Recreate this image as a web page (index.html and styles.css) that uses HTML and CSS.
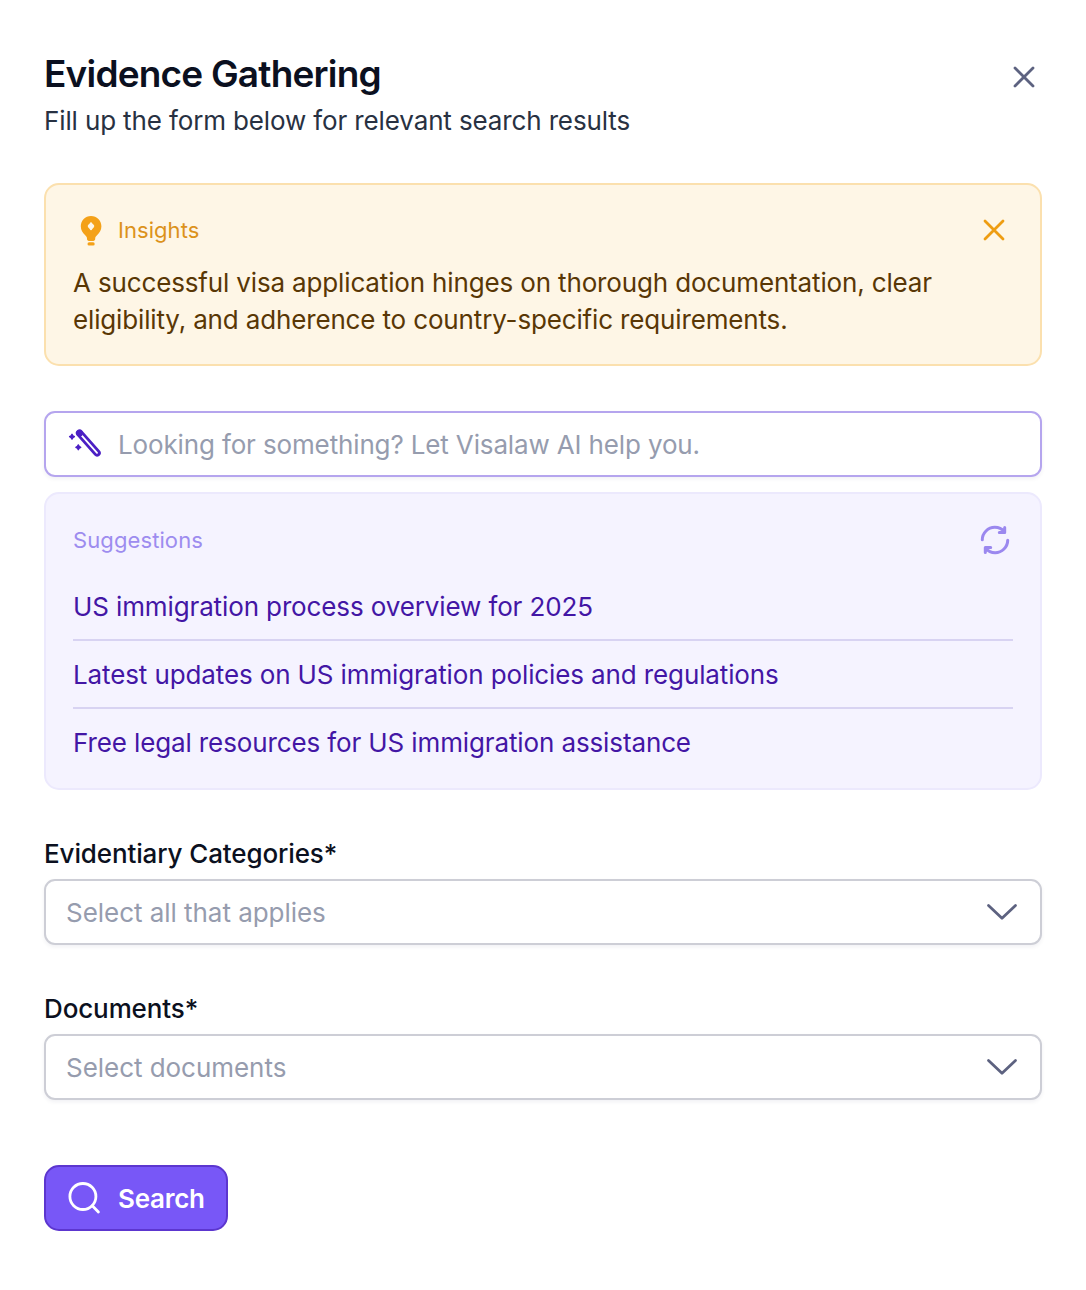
FILE: index.html
```html
<!DOCTYPE html>
<html lang="en">
<head>
    <title>Evidence Gathering</title>
    <meta charset="UTF-8">
    <meta name="viewport" content="width=device-width, initial-scale=1.0">
    <link rel="stylesheet" href="styles.css">
</head>
<body>

<div class="panel">
    <header class="panel-header">
        <div>
            <h1>Evidence Gathering</h1>
            <p class="subtitle">Fill up the form below for relevant search results</p>
        </div>
        <button type="button" class="icon-button close-panel" aria-label="Close">
            <svg width="22" height="22" viewBox="0 0 22 22"><path d="M2 2l18 18M20 2L2 20"/></svg>
        </button>
    </header>

    <section class="insights">
        <div class="insights-header">
            <svg class="bulb" width="22" height="30" viewBox="0 0 22 30">
                <path fill-rule="evenodd" d="M11 0C5.200 0 .8 4.600.8 10.200c0 3.800 1.900 6.500 4.200 8.700 1.300 1.300 2 2.200 2 3.500v.6c0 1.100.8 1.900 1.900 1.900h4.400c1.100 0 1.900-.8 1.900-1.900v-.6c0-1.300.7-2.200 2-3.500 2.300-2.200 4.200-4.900 4.200-8.700C21.400 4.600 16.800 0 11 0zM11 6.200q.8 0 1.300 1.200l1.600 1.700q.8 1.100 0 2.200l-1.600 1.700q-.5 1.200-1.300 1.200t-1.300-1.200l-1.600-1.700q-.8-1.100 0-2.200l1.600-1.700q.5-1.200 1.300-1.200z"/>
                <rect x="7.500" y="26.300" width="7.200" height="3.200" rx="1.600"/>
            </svg>
            <span class="insights-title">Insights</span>
            <button type="button" class="icon-button close-insights" aria-label="Dismiss">
                <svg width="22" height="22" viewBox="0 0 22 22"><path d="M2 2l18 18M20 2L2 20"/></svg>
            </button>
        </div>
        <p>A successful visa application hinges on thorough documentation, clear eligibility, and adherence to country-specific requirements.</p>
    </section>

    <form>
        <div class="ai-search">
            <svg class="wand" width="34" height="30" viewBox="0 0 34 30">
                <rect x="-2.300" y="-15.500" width="4.600" height="31" rx="2.300" transform="translate(20.300 14) rotate(-41.500)"/>
                <circle class="solid" cx="11.600" cy="4.200" r="2.600"/>
                <path class="solid" d="M4 5.300l.9 1.500 1.500.9-1.500.9-.9 1.500-.9-1.500-1.500-.9 1.500-.9zM10.300 15.900l.9 1.500 1.500.9-1.500.9-.9 1.500-.9-1.500-1.500-.9 1.500-.9z"/>
            </svg>
            <input type="text" placeholder="Looking for something? Let Visalaw AI help you.">
        </div>

        <section class="suggestions">
            <div class="suggestions-header">
                <h2>Suggestions</h2>
                <button type="button" class="icon-button refresh" aria-label="Refresh">
                    <svg width="30" height="30" viewBox="0 0 30 30">
                        <path d="M2.300 14.800C2.300 8 8 2.300 14.800 2.300c4 0 7.200 1.600 9.600 4.500M19.300 7.600h5.400V2.600"/>
                        <path d="M27.700 15.200c0 6.800-5.700 12.500-12.500 12.500-4 0-7.200-1.600-9.600-4.500M10.700 22.400H5.300v5"/>
                    </svg>
                </button>
            </div>
            <ul>
                <li>US immigration process overview for 2025</li>
                <li>Latest updates on US immigration policies and regulations</li>
                <li>Free legal resources for US immigration assistance</li>
            </ul>
        </section>

        <div class="field">
            <label for="categories">Evidentiary Categories*</label>
            <button type="button" class="select" id="categories">
                <span>Select all that applies</span>
                <svg width="32" height="18" viewBox="0 0 32 18"><path d="M2.500 2.500L16 15.200 29.500 2.500"/></svg>
            </button>
        </div>

        <div class="field">
            <label for="documents">Documents*</label>
            <button type="button" class="select" id="documents">
                <span>Select documents</span>
                <svg width="32" height="18" viewBox="0 0 32 18"><path d="M2.500 2.500L16 15.200 29.500 2.500"/></svg>
            </button>
        </div>

        <button type="submit" class="search-button">
            <svg width="34" height="34" viewBox="0 0 34 34"><circle cx="14.900" cy="15.500" r="13"/><path d="M24.300 24.800l6.100 6.200"/></svg>
            <span>Search</span>
        </button>
    </form>
</div>

</body>
</html>
```
FILE: styles.css
```css
/* Global styles */
* {
    box-sizing: border-box;
}

body {
    background-color: #ffffff;
    color: #0b1020;
    font-family: Inter, sans-serif;
    font-size: 26px;
    margin: 0;
}

h1, h2, p, ul {
    margin: 0;
    padding: 0;
}

svg {
    display: block;
    flex: none;
    fill: none;
    stroke: currentColor;
    stroke-width: 2.8;
    stroke-linecap: round;
    stroke-linejoin: round;
    overflow: visible;
}

button, input {
    font: inherit;
    letter-spacing: inherit;
}

.icon-button {
    background: none;
    border: 0;
    padding: 0;
    cursor: pointer;
}

.panel {
    padding: 51px 44px 0;
}

/* Header */
.panel-header {
    display: flex;
    justify-content: space-between;
    height: 132px;
}

.panel-header h1 {
    font-size: 37px;
    font-weight: 600;
    line-height: 46px;
    letter-spacing: -0.8px;
}

.subtitle {
    color: #283142;
    line-height: 47px;
    letter-spacing: -0.13px;
}

.close-panel {
    align-self: flex-start;
    color: #5d6280;
    margin: 15px 7px 0 0;
}

/* Insights card */
.insights {
    height: 183px;
    padding: 27px 27px 0;
    background-color: #fef6e6;
    border: 2px solid #fbe0ae;
    border-radius: 15px;
    color: #593705;
}

.insights-header {
    display: flex;
    align-items: center;
    height: 36px;
    margin-bottom: 16px;
}

.bulb {
    fill: #f4a118;
    stroke: none;
    margin: 1px 16px 0 7px;
}

.insights-title {
    color: #dc921b;
    font-size: 22px;
    letter-spacing: 0.05px;
}

.close-insights {
    color: #ee9d12;
    margin: 0 8px 0 auto;
}

.insights p {
    line-height: 37px;
    letter-spacing: -0.15px;
}

/* AI search input */
.ai-search {
    display: flex;
    align-items: center;
    height: 66px;
    margin-top: 45px;
    padding: 0 22px;
    border: 2px solid #b5a5ee;
    border-radius: 11px;
    box-shadow: 0 2px 4px rgba(20, 20, 60, 0.06);
}

.wand {
    color: #4b1fc4;
    margin-right: 16px;
}

.wand .solid {
    fill: currentColor;
    stroke-width: 1.4;
}

.ai-search input {
    flex: 1;
    padding: 0;
    border: 0;
    outline: 0;
    background: none;
    letter-spacing: -0.14px;
}

.ai-search input::placeholder {
    color: #969cae;
}

/* Suggestions */
.suggestions {
    height: 298px;
    margin-top: 15px;
    padding: 28px 27px 0;
    background-color: #f5f3ff;
    border: 2px solid #ece9fd;
    border-radius: 15px;
}

.suggestions-header {
    display: flex;
    align-items: center;
    justify-content: space-between;
    height: 36px;
    margin-bottom: 15px;
}

.suggestions h2 {
    color: #9d8cef;
    font-size: 22px;
    font-weight: 400;
    letter-spacing: 0.1px;
}

.refresh {
    color: #9b88ef;
    margin-right: 3px;
}

.refresh svg {
    stroke-width: 3;
}

.suggestions ul {
    list-style: none;
}

.suggestions li {
    height: 68px;
    color: #4316a5;
    line-height: 68px;
    letter-spacing: -0.12px;
    border-bottom: 2px solid #d8d3f2;
}

.suggestions li:last-child {
    border-bottom: 0;
}

/* Select fields */
.field {
    margin-top: 45px;
}

.field label {
    display: block;
    height: 44px;
    font-weight: 500;
    line-height: 37px;
    letter-spacing: -0.12px;
}

.select {
    display: flex;
    align-items: center;
    justify-content: space-between;
    width: 100%;
    height: 66px;
    padding: 0 22px 0 20px;
    background-color: #ffffff;
    border: 2px solid #cdced6;
    border-radius: 11px;
    box-shadow: 0 2px 4px rgba(20, 20, 60, 0.06);
    color: #969cae;
    letter-spacing: -0.04px;
}

.select svg {
    color: #5d6280;
}

/* Submit */
.search-button {
    display: flex;
    align-items: center;
    gap: 16px;
    width: 184px;
    height: 66px;
    margin-top: 65px;
    padding: 0 22px;
    background-color: #7857f7;
    border: 2px solid #5c36cf;
    border-radius: 15px;
    color: #ffffff;
    font-weight: 600;
    letter-spacing: -0.25px;
    cursor: pointer;
}
```
